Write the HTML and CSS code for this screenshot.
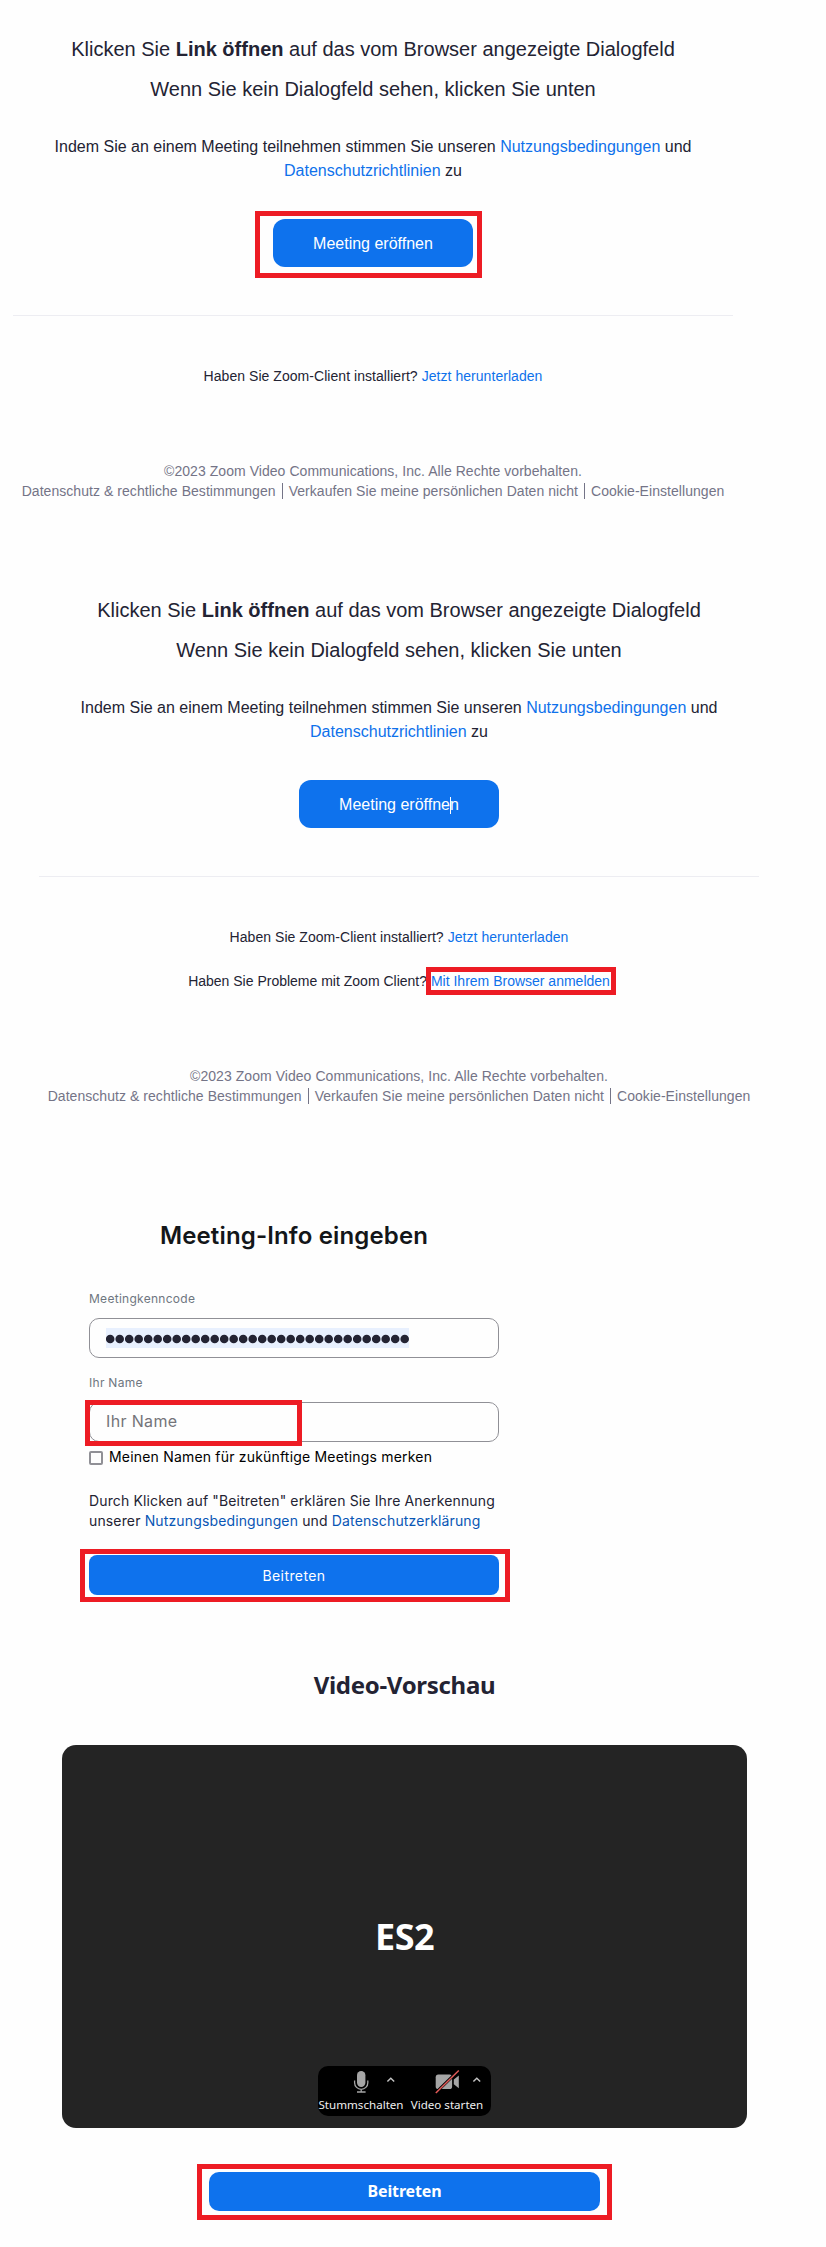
FILE: index.html
```html
<!DOCTYPE html>
<html lang="de">
<head>
    <meta charset="UTF-8">
    <meta name="viewport" content="width=device-width, initial-scale=1.0">
    <title>Zoom Meeting beitreten</title>
    <link rel="stylesheet" href="styles.css">
</head>
<body>
    <section class="launch">
        <h2 class="launch-title">Klicken Sie <b>Link öffnen</b> auf das vom Browser angezeigte Dialogfeld</h2>
        <h2 class="launch-title">Wenn Sie kein Dialogfeld sehen, klicken Sie unten</h2>
        <p class="terms">Indem Sie an einem Meeting teilnehmen stimmen Sie unseren <a href="#">Nutzungsbedingungen</a> und<br><a href="#">Datenschutzrichtlinien</a> zu</p>
        <div class="marked mark-open">
            <button class="btn btn-open">Meeting eröffnen</button>
        </div>
        <hr class="divider">
        <p class="hint">Haben Sie Zoom-Client installiert? <a href="#">Jetzt herunterladen</a></p>
        <div class="footer">
            <p>©2023 Zoom Video Communications, Inc. Alle Rechte vorbehalten.</p>
            <div class="footer-links">
                <span>Datenschutz &amp; rechtliche Bestimmungen</span>
                <span>Verkaufen Sie meine persönlichen Daten nicht</span>
                <span>Cookie-Einstellungen</span>
            </div>
        </div>
    </section>

    <section class="launch launch-browser">
        <h2 class="launch-title">Klicken Sie <b>Link öffnen</b> auf das vom Browser angezeigte Dialogfeld</h2>
        <h2 class="launch-title">Wenn Sie kein Dialogfeld sehen, klicken Sie unten</h2>
        <p class="terms">Indem Sie an einem Meeting teilnehmen stimmen Sie unseren <a href="#">Nutzungsbedingungen</a> und<br><a href="#">Datenschutzrichtlinien</a> zu</p>
        <button class="btn btn-open">Meeting eröffne<span class="caret"></span>n</button>
        <hr class="divider">
        <p class="hint">Haben Sie Zoom-Client installiert? <a href="#">Jetzt herunterladen</a></p>
        <p class="hint hint-browser">Haben Sie Probleme mit Zoom Client? <a href="#" class="marked mark-link">Mit Ihrem Browser anmelden</a></p>
        <div class="footer">
            <p>©2023 Zoom Video Communications, Inc. Alle Rechte vorbehalten.</p>
            <div class="footer-links">
                <span>Datenschutz &amp; rechtliche Bestimmungen</span>
                <span>Verkaufen Sie meine persönlichen Daten nicht</span>
                <span>Cookie-Einstellungen</span>
            </div>
        </div>
    </section>

    <section class="join">
        <h1 class="join-title">Meeting-Info eingeben</h1>
        <div class="label">Meetingkenncode</div>
        <div class="field">
            <svg class="dots" width="303" height="20" viewBox="0 0 303 20">
                <line x1="4.2" y1="11" x2="299" y2="11"/>
            </svg>
        </div>
        <div class="label label-name">Ihr Name</div>
        <div class="field marked mark-name">Ihr Name</div>
        <div class="remember">
            <span class="checkbox"></span>
            <span>Meinen Namen für zukünftige Meetings merken</span>
        </div>
        <p class="join-terms">Durch Klicken auf "Beitreten" erklären Sie Ihre Anerkennung<br>unserer <a href="#">Nutzungsbedingungen</a> und <a href="#">Datenschutzerklärung</a></p>
        <div class="marked mark-join">
            <button class="btn btn-join">Beitreten</button>
        </div>
    </section>

    <section class="preview">
        <h1 class="preview-title">Video-Vorschau</h1>
        <div class="video">
            <div class="video-name">ES2</div>
            <div class="controls">
                <div class="control">
                    <svg width="86" height="30" viewBox="0 0 86 30">
                        <rect x="39" y="5" width="8.4" height="16" rx="4.2" fill="#a5a5a5"/>
                        <path d="M36.6 14.5v2.2a6.6 6.6 0 0 0 13.2 0v-2.2M43.2 23.3v2.5M39 26h8.6" fill="none" stroke="#a5a5a5" stroke-width="1.3"/>
                        <path d="M69.4 15.6l3.4-3.4 3.4 3.4" fill="none" stroke="#c4c4c4" stroke-width="1.4"/>
                    </svg>
                    <span>Stummschalten</span>
                </div>
                <div class="control">
                    <svg width="86" height="30" viewBox="0 0 86 30">
                        <rect x="31.7" y="8.6" width="16.4" height="14.5" rx="2.6" fill="#a5a5a5"/>
                        <path d="M49.8 13.6l5-4v12.6l-5-4z" fill="#a5a5a5"/>
                        <path d="M31.5 27L54.5 4.5" stroke="#000" stroke-width="3"/>
                        <path d="M31.8 27L54.8 4.5" stroke="#e25a58" stroke-width="1.5"/>
                        <path d="M69.4 15.6l3.4-3.4 3.4 3.4" fill="none" stroke="#c4c4c4" stroke-width="1.4"/>
                    </svg>
                    <span>Video starten</span>
                </div>
            </div>
        </div>
        <div class="marked mark-preview">
            <button class="btn btn-preview">Beitreten</button>
        </div>
    </section>
</body>
</html>
```
FILE: styles.css
```css
* {
    margin: 0;
    padding: 0;
    box-sizing: border-box;
}

body {
    min-height: 2247px;
    background: #fefefe;
    color: #232333;
    font-family: 'Liberation Sans', Arial, sans-serif;
}

a {
    color: #0e71eb;
    text-decoration: none;
}

.btn {
    display: block;
    background: #0e72ed;
    color: white;
    border: none;
    font-family: inherit;
    cursor: pointer;
}

/* red frames around the important controls */
.marked {
    position: relative;
}

.marked::after {
    content: '';
    position: absolute;
    border: 5px solid #ed1c24;
    pointer-events: none;
}

.mark-open::after {
    inset: -8px -9px -11px -18px;
}

.mark-link::after {
    inset: -6px -6px -6px -5px;
}

.mark-name::after {
    inset: -3px 196px -5px -5px;
}

.mark-join::after {
    inset: -6px -11px -7px -9px;
}

.mark-preview::after {
    inset: -8px -12px -9px -12px;
}

/* launch pages */
.launch {
    width: 720px;
    height: 561px;
    margin-left: 13px;
    padding-top: 29px;
    display: flex;
    flex-direction: column;
    align-items: center;
    text-align: center;
}

.launch-browser {
    height: 605px;
    margin-left: 39px;
}

.launch-title {
    font-size: 20px;
    font-weight: normal;
    line-height: 40px;
}

.terms {
    font-size: 16px;
    line-height: 24px;
    margin: 26px 0 36px;
}

.btn-open {
    width: 200px;
    height: 48px;
    padding-top: 1px;
    border-radius: 12px;
    font-size: 16px;
}

.caret {
    display: inline-block;
    width: 1px;
    height: 17px;
    margin-right: -1px;
    background: white;
    vertical-align: -4px;
}

.divider {
    width: 720px;
    border: none;
    border-top: 1px solid #ededf2;
    margin: 48px 0 50px;
}

.hint {
    font-size: 14px;
    line-height: 20px;
    letter-spacing: 0.05px;
}

.hint-browser {
    margin-top: 24px;
    letter-spacing: 0;
}

.footer {
    margin-top: 75px;
    color: #747487;
    font-size: 14px;
    line-height: 20px;
    letter-spacing: 0.05px;
}

.footer-links {
    display: flex;
    justify-content: center;
}

.footer-links span + span {
    position: relative;
    margin-left: 6px;
    padding-left: 7px;
}

.footer-links span + span::before {
    content: '';
    position: absolute;
    left: 0;
    top: 2px;
    width: 1px;
    height: 16px;
    background: #747487;
}

/* meeting info form */
.join {
    width: 410px;
    height: 489px;
    margin-left: 89px;
    padding-top: 54px;
    font-family: Inter, sans-serif;
}

.join-title {
    color: #131619;
    font-size: 24px;
    font-weight: 600;
    line-height: 32px;
    letter-spacing: 0.15px;
    text-align: center;
}

.label {
    margin-top: 37px;
    color: #6e7680;
    font-size: 12px;
    line-height: 20px;
    letter-spacing: 0.28px;
}

.label-name {
    margin-top: 15px;
}

.field {
    height: 40px;
    margin-top: 9px;
    padding: 0 16px;
    border: 1px solid #909096;
    border-radius: 10px;
    color: #747479;
    font-size: 16px;
    line-height: 37px;
    letter-spacing: 0.35px;
}

.dots {
    display: block;
    margin-top: 9px;
    background: #e8f0fe;
}

.dots line {
    stroke: #232333;
    stroke-width: 8.6;
    stroke-linecap: round;
    stroke-dasharray: 0 9.5;
}

.remember {
    display: flex;
    align-items: center;
    gap: 6px;
    margin-top: 8px;
    color: #000;
    font-size: 14px;
    line-height: 17px;
    letter-spacing: 0.19px;
}

.remember span:last-child {
    margin-top: -2px;
}

.checkbox {
    width: 14px;
    height: 14px;
    border: 2px solid #909096;
    border-radius: 2px;
}

.join-terms {
    margin: 26px 0 24px;
    font-size: 14px;
    line-height: 20px;
    letter-spacing: 0.14px;
    white-space: nowrap;
}

.join-terms a {
    color: #0956b5;
}

.btn-join {
    width: 410px;
    height: 40px;
    border-radius: 8px;
    font-size: 14px;
    letter-spacing: 0.4px;
}

/* video preview */
.preview {
    width: 685px;
    margin-left: 62px;
    padding-top: 14px;
    font-family: 'Noto Sans', sans-serif;
}

.preview-title {
    font-size: 24px;
    font-weight: 700;
    line-height: 32px;
    letter-spacing: -0.3px;
    text-align: center;
}

.video {
    position: relative;
    height: 383px;
    margin-top: 44px;
    background: #242424;
    border-radius: 14px;
    display: flex;
    align-items: center;
    justify-content: center;
}

.video-name {
    color: white;
    font-size: 36px;
    font-weight: 700;
    letter-spacing: -0.6px;
}

.controls {
    position: absolute;
    left: 256px;
    bottom: 12px;
    width: 173px;
    height: 50px;
    background: #000;
    border-radius: 10px;
    display: flex;
}

.control {
    width: 86px;
    color: #eee;
    font-size: 11.6px;
    line-height: 16px;
    text-align: center;
    white-space: nowrap;
}

.control svg {
    display: block;
    margin-bottom: 1px;
}

.mark-preview {
    width: 391px;
    margin: 44px auto 0;
}

.btn-preview {
    width: 391px;
    height: 39px;
    padding-bottom: 1px;
    border-radius: 10px;
    font-size: 16px;
    font-weight: 700;
    letter-spacing: -0.15px;
}
```
